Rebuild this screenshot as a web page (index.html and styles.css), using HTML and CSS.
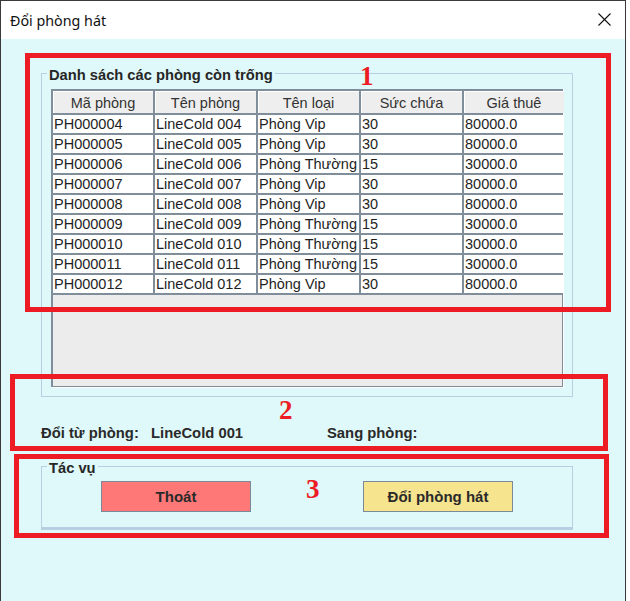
FILE: index.html
```html
<!DOCTYPE html>
<html lang="vi">
<head>
<meta charset="utf-8">
<title>Đổi phòng hát</title>
<link rel="stylesheet" href="styles.css">
</head>
<body>
<div class="window">
  <div class="titlebar">
    <span class="title">Đổi phòng hát</span>
    <svg class="close" width="13" height="13" viewBox="0 0 13 13"><path d="M0.5 0.5 L12.5 12.5 M12.5 0.5 L0.5 12.5" stroke="#111" stroke-width="1.1" fill="none"/></svg>
  </div>
  <div class="content">
    <div class="group group-list">
      <span class="legend">Danh sách các phòng còn trống</span>
      <div class="table">
        <div class="grid">
          <div class="th">Mã phòng</div><div class="th">Tên phòng</div><div class="th">Tên loại</div><div class="th">Sức chứa</div><div class="th">Giá thuê</div>
          <div class="td">PH000004</div><div class="td">LineCold 004</div><div class="td">Phòng Vip</div><div class="td">30</div><div class="td">80000.0</div>
          <div class="td">PH000005</div><div class="td">LineCold 005</div><div class="td">Phòng Vip</div><div class="td">30</div><div class="td">80000.0</div>
          <div class="td">PH000006</div><div class="td">LineCold 006</div><div class="td">Phòng Thường</div><div class="td">15</div><div class="td">30000.0</div>
          <div class="td">PH000007</div><div class="td">LineCold 007</div><div class="td">Phòng Vip</div><div class="td">30</div><div class="td">80000.0</div>
          <div class="td">PH000008</div><div class="td">LineCold 008</div><div class="td">Phòng Vip</div><div class="td">30</div><div class="td">80000.0</div>
          <div class="td">PH000009</div><div class="td">LineCold 009</div><div class="td">Phòng Thường</div><div class="td">15</div><div class="td">30000.0</div>
          <div class="td">PH000010</div><div class="td">LineCold 010</div><div class="td">Phòng Thường</div><div class="td">15</div><div class="td">30000.0</div>
          <div class="td">PH000011</div><div class="td">LineCold 011</div><div class="td">Phòng Thường</div><div class="td">15</div><div class="td">30000.0</div>
          <div class="td">PH000012</div><div class="td">LineCold 012</div><div class="td">Phòng Vip</div><div class="td">30</div><div class="td">80000.0</div>
        </div>
      </div>
    </div>
    <div class="info">
      <span class="lbl-from">Đổi từ phòng:</span>
      <span class="val-from">LineCold 001</span>
      <span class="lbl-to">Sang phòng:</span>
    </div>
    <div class="group group-actions">
      <span class="legend">Tác vụ</span>
      <button class="btn btn-exit">Thoát</button>
      <button class="btn btn-change">Đổi phòng hát</button>
    </div>
  </div>
  <div class="mark mark-1"></div>
  <div class="mark mark-2"></div>
  <div class="mark mark-3"></div>
  <span class="num num-1">1</span>
  <span class="num num-2">2</span>
  <span class="num num-3">3</span>
</div>
</body>
</html>
```
FILE: styles.css
```css
html, body {
  margin: 0;
  padding: 0;
  background: #ffffff;
}
body {
  font-family: "Liberation Sans", Arial, sans-serif;
  color: #222;
}
.window {
  position: relative;
  width: 624px;
  height: 600px;
  border-left: 1px solid #3a3a3a;
  border-right: 1px solid #3a3a3a;
  border-top: 1px solid #3a3a3a;
  background: #dff8f9;
  overflow: hidden;
}
.titlebar {
  height: 38px;
  background: #ffffff;
  display: flex;
  align-items: center;
  justify-content: space-between;
  padding: 0 14px 0 9px;
}
.title {
  font-family: "Noto Sans", "Open Sans", sans-serif;
  font-size: 14.3px;
  color: #111;
}
.close {
  display: block;
  margin-top: -1px;
}
.content {
  padding: 34px 0 0 40px;
}
.group {
  position: relative;
  box-sizing: border-box;
  width: 532px;
  border: 1px solid #b7cfe3;
}
.legend {
  position: absolute;
  top: -7px;
  left: 5px;
  padding: 0 2px;
  background: #dff8f9;
  font-weight: bold;
  font-size: 14.7px;
  line-height: 16px;
  color: #262626;
}
.group-list {
  padding: 15px 9px 9px 9px;
}
.table {
  box-sizing: border-box;
  height: 298px;
  border: 2px solid #808d9b;
  border-bottom-width: 1px;
  border-right-width: 1px;
  background: #ececec;
  box-shadow: 1px 1px 0 #ffffff;
}
.grid {
  display: grid;
  grid-template-columns: 100px 101px 101px 101px 100px;
  grid-auto-rows: 18px;
  grid-template-rows: 22px;
  gap: 2px;
  background: #808d9b;
  padding-bottom: 2px;
}
.th {
  background: #eeeeee;
  box-shadow: inset 1px 1px 0 #ffffff;
  text-align: center;
  font-size: 14.5px;
  line-height: 19px;
  padding-top: 3px;
  color: #333;
}
.td {
  background: #ffffff;
  font-size: 14.5px;
  line-height: 18px;
  padding-left: 1px;
  white-space: nowrap;
  overflow: hidden;
  color: #1e1e1e;
}
.info {
  display: flex;
  margin-top: 28px;
  font-weight: bold;
  font-size: 14.8px;
  line-height: 16px;
  color: #2a2a2a;
}
.lbl-from { width: 110px; }
.val-from { width: 176px; }
.group-actions {
  margin-top: 25px;
  display: flex;
  justify-content: space-between;
  padding: 14px 59px 15px 59px;
  border-bottom: 3px solid #b7cfe3;
}
.btn {
  width: 150px;
  height: 31px;
  box-sizing: border-box;
  border: 1px solid #7b8a99;
  font-family: "Liberation Sans", Arial, sans-serif;
  font-weight: bold;
  font-size: 15px;
  color: #2a2a2a;
  padding: 0;
}
.btn-exit { background: #ff7878; }
.btn-change { background: #f6e48e; }
.mark {
  position: absolute;
  border: 5px solid #ed1c24;
  box-sizing: border-box;
  pointer-events: none;
}
.mark-1 { left: 24px; top: 52px; width: 586px; height: 259px; }
.mark-2 { left: 9px; top: 373px; width: 598px; height: 77px; }
.mark-3 { left: 13px; top: 453px; width: 595px; height: 84px; }
.num {
  position: absolute;
  font-family: "Liberation Serif", "Times New Roman", serif;
  font-weight: bold;
  font-size: 27px;
  line-height: 27px;
  color: #ed1c24;
}
.num-1 { left: 359px; top: 62px; }
.num-2 { left: 278px; top: 396px; }
.num-3 { left: 305px; top: 475px; }
```
